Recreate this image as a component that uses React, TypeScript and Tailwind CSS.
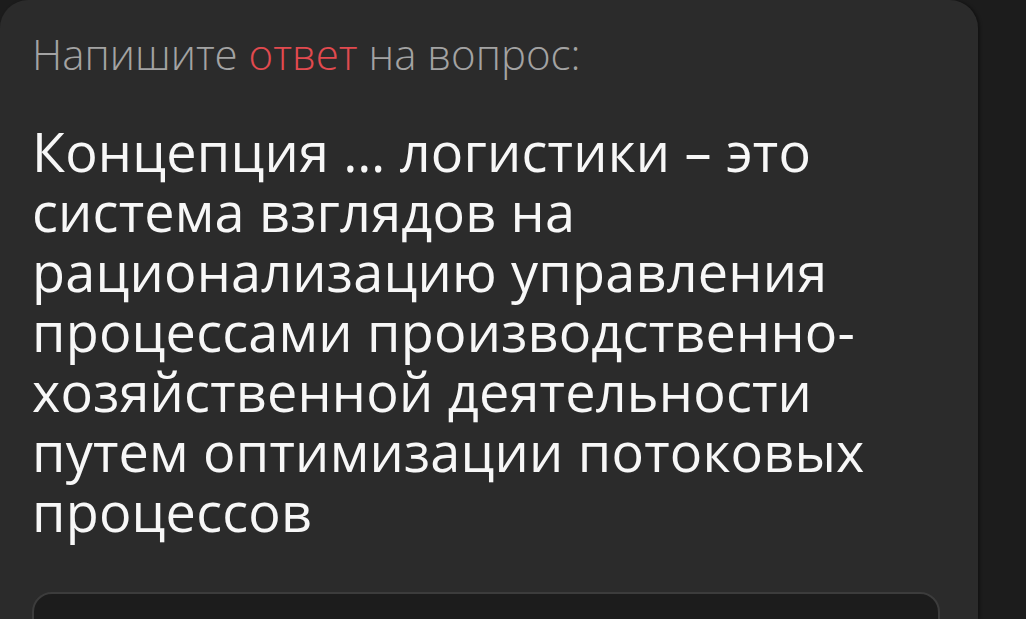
const lines = [
  "Концепция … логистики – это",
  "система взглядов на",
  "рационализацию управления",
  "процессами производственно-",
  "хозяйственной деятельности",
  "путем оптимизации потоковых",
  "процессов",
];

export default function App() {
  return (
    <div className="h-[619px] w-[1026px] overflow-hidden bg-[#1c1c1c] font-['Open_Sans',sans-serif]">
      <div className="h-full w-[978px] rounded-t-[28px] bg-[#2b2b2b] px-8 pt-[30px] shadow-[2px_0_3px_rgba(0,0,0,0.35)]">
        {/* Prompt */}
        <p className="text-[42px] font-light leading-[48px] text-[#a3a3a3]">
          Напишите <span className="text-[#e24a4f]">ответ</span> на вопрос:
        </p>

        {/* Question */}
        <h1 className="mt-[43px] text-[54px] font-normal leading-[60px] tracking-[0.2px] text-[#f7f7f7]">
          {lines.map((l, i) => (
            <span key={i} className="block">
              {l}
            </span>
          ))}
        </h1>

        {/* Answer input */}
        <div className="mt-[51px] h-[80px] w-[908px] rounded-[20px] border-2 border-[#3c3c3c] bg-[#1c1c1c]" />
      </div>
    </div>
  );
}
